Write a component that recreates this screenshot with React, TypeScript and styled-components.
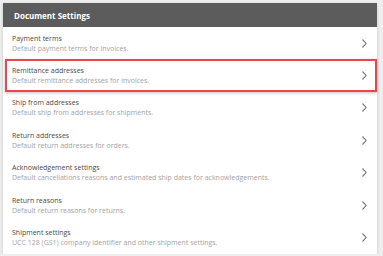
import React from 'react';
import styled, { createGlobalStyle } from 'styled-components';

const GlobalStyle = createGlobalStyle`
  html, body {
    margin: 0;
    padding: 0;
    background: #eeeeee;
    font-family: 'Open Sans', 'Liberation Sans', sans-serif;
  }
  #root {
    padding: 3px 6px 0 3px;
  }
`;

const Card = styled.div`
  width: 374px;
  background: #ffffff;
  box-shadow: 0 1px 3px rgba(0, 0, 0, 0.18);
`;

const Header = styled.div`
  height: 24px;
  display: flex;
  align-items: center;
  padding-left: 11px;
  background: #5c5c5c;
  color: #ffffff;
  font-size: 8px;
  font-weight: 700;
`;

const List = styled.ul`
  list-style: none;
  margin: 0;
  padding: 0;
`;

const Row = styled.li<{ $active?: boolean }>`
  box-sizing: border-box;
  height: 32.4px;
  display: flex;
  align-items: center;
  padding: 0 8px 0 5px;
  cursor: pointer;
  border: 2px solid ${(p) => (p.$active ? '#e8474c' : 'transparent')};
  margin-left: 2px;
  box-shadow: ${(p) => (p.$active ? '0 1px 3px rgba(0,0,0,0.25)' : 'none')};
`;

const Text = styled.div`
  flex: 1;
  display: flex;
  flex-direction: column;
  gap: 1px;
`;

const Title = styled.span`
  font-size: 7px;
  color: #4a4a4a;
  line-height: 9px;
`;

const Desc = styled.span`
  font-size: 7px;
  color: #a3a3a3;
  line-height: 9px;
`;

const Chevron = () => (
  <svg width="5" height="9" viewBox="0 0 5 9" fill="none">
    <path d="M0.8 0.8l3.4 3.7-3.4 3.7" stroke="#666666" strokeWidth="1.1" strokeLinecap="round" strokeLinejoin="round" />
  </svg>
);

const items = [
  { title: 'Payment terms', desc: 'Default payment terms for invoices.' },
  { title: 'Remittance addresses', desc: 'Default remittance addresses for invoices.', active: true },
  { title: 'Ship from addresses', desc: 'Default ship from addresses for shipments.' },
  { title: 'Return addresses', desc: 'Default return addresses for orders.' },
  {
    title: 'Acknowledgement settings',
    desc: 'Default cancellations reasons and estimated ship dates for acknowledgements.',
  },
  { title: 'Return reasons', desc: 'Default return reasons for returns.' },
  { title: 'Shipment settings', desc: 'UCC 128 (GS1) company identifier and other shipment settings.' },
];

const App = () => (
  <>
    <GlobalStyle />
    <Card>
      <Header>Document Settings</Header>
      <List>
        {items.map((it) => (
          <Row key={it.title} $active={it.active}>
            <Text>
              <Title>{it.title}</Title>
              <Desc>{it.desc}</Desc>
            </Text>
            <Chevron />
          </Row>
        ))}
      </List>
    </Card>
  </>
);

export default App;
